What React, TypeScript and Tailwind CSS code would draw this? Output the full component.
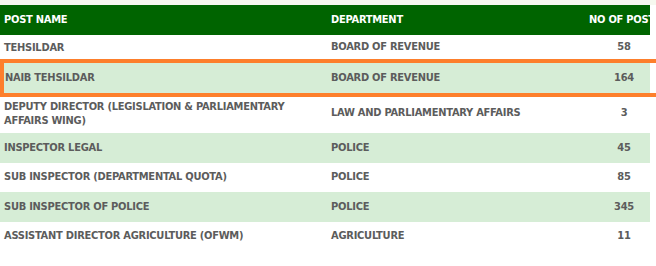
import React from 'react';

type Post = { name: string[]; dept: string; count: number; shade?: boolean; picked?: boolean };

const posts: Post[] = [
  { name: ['TEHSILDAR'], dept: 'BOARD OF REVENUE', count: 58 },
  { name: ['NAIB TEHSILDAR'], dept: 'BOARD OF REVENUE', count: 164, shade: true, picked: true },
  { name: ['DEPUTY DIRECTOR (LEGISLATION & PARLIAMENTARY', 'AFFAIRS WING)'], dept: 'LAW AND PARLIAMENTARY AFFAIRS', count: 3 },
  { name: ['INSPECTOR LEGAL'], dept: 'POLICE', count: 45, shade: true },
  { name: ['SUB INSPECTOR (DEPARTMENTAL QUOTA)'], dept: 'POLICE', count: 85 },
  { name: ['SUB INSPECTOR OF POLICE'], dept: 'POLICE', count: 345, shade: true },
  { name: ['ASSISTANT DIRECTOR AGRICULTURE (OFWM)'], dept: 'AGRICULTURE', count: 11 },
];

const Cells: React.FC<{ post: Post; first: string }> = ({ post, first }) => (
  <>
    <div className={`${first} shrink-0 leading-[14px] whitespace-nowrap`}>
      {post.name.map((line) => (
        <div key={line}>{line}</div>
      ))}
    </div>
    <div className="w-[263px] shrink-0 pl-[5px] whitespace-nowrap">{post.dept}</div>
    <div className="flex-1 text-center pl-[9px]">{post.count}</div>
  </>
);

const App: React.FC = () => {
  return (
    <div className="w-[656px] h-[266px] overflow-hidden bg-white pt-[5px] relative font-['DejaVu_Sans',sans-serif] font-stretch-condensed tracking-[-0.25px] text-[11px] font-bold text-[#5c5c5c]">
      <div className="absolute top-0 left-0 w-full h-[5px] bg-[#f6f8ef]" />
      <div className="w-[650px] h-[30px] bg-[#006400] text-white flex items-center overflow-hidden whitespace-nowrap">
        <div className="w-[326px] shrink-0 pl-1">POST NAME</div>
        <div className="w-[263px] shrink-0 pl-[5px]">DEPARTMENT</div>
        <div className="flex-1">NO OF POSTS</div>
      </div>
      {posts.map((post, i) =>
        post.picked ? (
          <div key={post.name[0]} className="w-[680px] border-y-4 border-l-4 border-[#fd7f2c]">
            <div className="w-[646px] h-[30px] bg-[#d6edd6] flex items-center">
              <Cells post={post} first="w-[322px] pl-[1px]" />
            </div>
          </div>
        ) : (
          <div
            key={post.name[0]}
            className={`w-[650px] flex items-center ${post.shade ? 'bg-[#d6edd6]' : 'bg-white'} ${
              post.name.length > 1 ? 'h-[36px] pb-[3px]' : i === 0 ? 'h-[24px] pt-[1px]' : 'h-[29.5px]'
            }`}
          >
            <Cells post={post} first="w-[326px] pl-1" />
          </div>
        )
      )}
    </div>
  );
};

export default App;
